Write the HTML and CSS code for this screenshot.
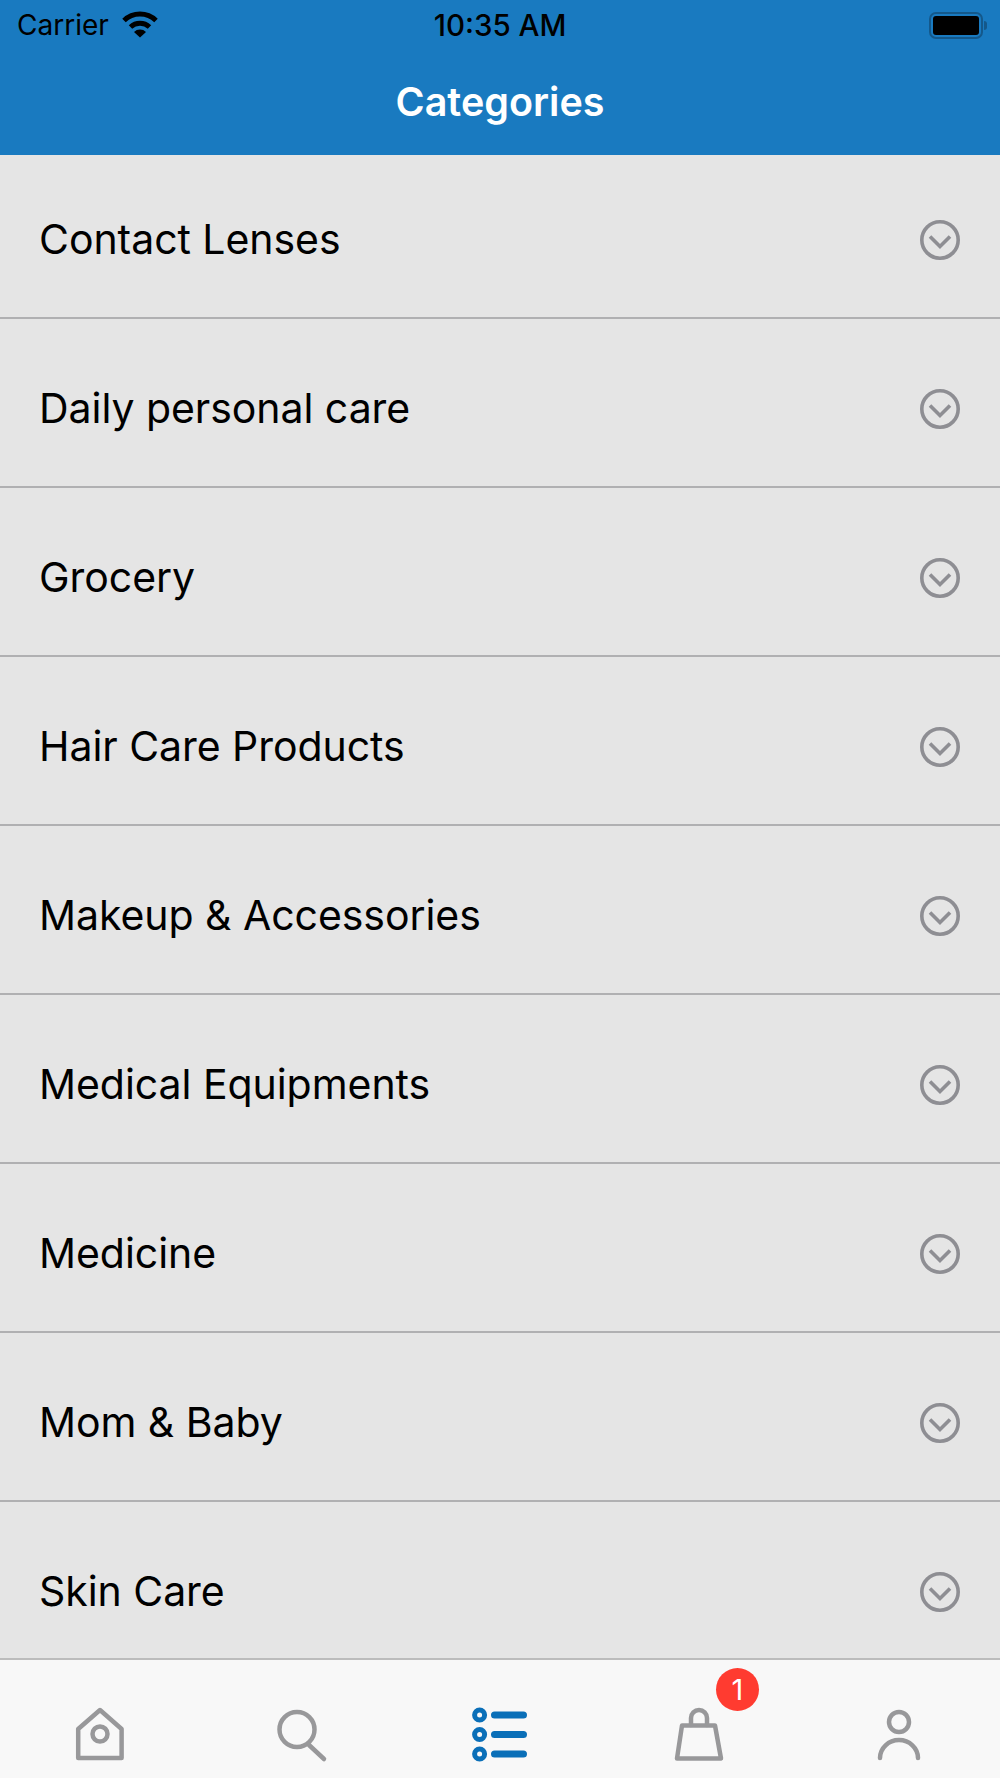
FILE: index.html
```html
<!DOCTYPE html>
<html lang="en">
<head>
    <meta charset="UTF-8">
    <meta name="viewport" content="width=device-width, initial-scale=1.0">
    <title>Categories</title>
    <link rel="stylesheet" href="styles.css">
</head>
<body>
    <div class="screen">
        <header class="top">
            <div class="status">
                <div class="carrier">
                    <span>Carrier</span>
                    <svg class="wifi" width="38" height="28" viewBox="0 0 38 28">
                        <path d="M3 10.5 A23 23 0 0 1 35 10.5" fill="none" stroke="#000" stroke-width="5"/>
                        <path d="M9.5 17 A14 14 0 0 1 28.5 17" fill="none" stroke="#000" stroke-width="5"/>
                        <path d="M13 22 A8.5 8.5 0 0 1 25 22 L19 27.5 Z" fill="#000"/>
                    </svg>
                </div>
                <div class="clock">10:35 AM</div>
                <div class="battery">
                    <div class="battery-body"><div class="battery-fill"></div></div>
                    <div class="battery-nub"></div>
                </div>
            </div>
            <h1 class="title">Categories</h1>
        </header>

        <main class="list">
            <div class="row">
                <span>Contact Lenses</span>
                <svg class="chev" width="40" height="40" viewBox="0 0 40 40"><circle cx="20" cy="20" r="18.2"/><path d="M10 16.5 L20 26.5 L30 16.5"/></svg>
            </div>
            <div class="row">
                <span>Daily personal care</span>
                <svg class="chev" width="40" height="40" viewBox="0 0 40 40"><circle cx="20" cy="20" r="18.2"/><path d="M10 16.5 L20 26.5 L30 16.5"/></svg>
            </div>
            <div class="row">
                <span>Grocery</span>
                <svg class="chev" width="40" height="40" viewBox="0 0 40 40"><circle cx="20" cy="20" r="18.2"/><path d="M10 16.5 L20 26.5 L30 16.5"/></svg>
            </div>
            <div class="row">
                <span>Hair Care Products</span>
                <svg class="chev" width="40" height="40" viewBox="0 0 40 40"><circle cx="20" cy="20" r="18.2"/><path d="M10 16.5 L20 26.5 L30 16.5"/></svg>
            </div>
            <div class="row">
                <span>Makeup &amp; Accessories</span>
                <svg class="chev" width="40" height="40" viewBox="0 0 40 40"><circle cx="20" cy="20" r="18.2"/><path d="M10 16.5 L20 26.5 L30 16.5"/></svg>
            </div>
            <div class="row">
                <span>Medical Equipments</span>
                <svg class="chev" width="40" height="40" viewBox="0 0 40 40"><circle cx="20" cy="20" r="18.2"/><path d="M10 16.5 L20 26.5 L30 16.5"/></svg>
            </div>
            <div class="row">
                <span>Medicine</span>
                <svg class="chev" width="40" height="40" viewBox="0 0 40 40"><circle cx="20" cy="20" r="18.2"/><path d="M10 16.5 L20 26.5 L30 16.5"/></svg>
            </div>
            <div class="row">
                <span>Mom &amp; Baby</span>
                <svg class="chev" width="40" height="40" viewBox="0 0 40 40"><circle cx="20" cy="20" r="18.2"/><path d="M10 16.5 L20 26.5 L30 16.5"/></svg>
            </div>
            <div class="row">
                <span>Skin Care</span>
                <svg class="chev" width="40" height="40" viewBox="0 0 40 40"><circle cx="20" cy="20" r="18.2"/><path d="M10 16.5 L20 26.5 L30 16.5"/></svg>
            </div>
        </main>

        <nav class="tabs">
            <div class="tab">
                <svg class="tab-icon" width="60" height="60" viewBox="0 0 60 60">
                    <path d="M8.2 53 V24 L30 5 L51.6 24 V53 Z"/>
                    <circle cx="30" cy="29" r="7.5"/>
                </svg>
            </div>
            <div class="tab">
                <svg class="tab-icon" width="60" height="60" viewBox="0 0 60 60">
                    <circle cx="27" cy="24.5" r="17.5"/>
                    <path d="M39 40 L54 54"/>
                </svg>
            </div>
            <div class="tab">
                <svg class="tab-icon active" width="60" height="60" viewBox="0 0 60 60">
                    <circle cx="9.6" cy="10" r="5"/>
                    <circle cx="9.6" cy="29.5" r="5"/>
                    <circle cx="9.6" cy="49" r="5"/>
                    <path d="M24.6 10 H53.4 M24.6 29.5 H53.4 M24.6 49 H53.4"/>
                </svg>
            </div>
            <div class="tab">
                <svg class="tab-icon" width="60" height="60" viewBox="0 0 60 60">
                    <path d="M12 20.5 H45 L51 53.5 H7 Z"/>
                    <path d="M21 20 V13 A8 8 0 0 1 37 13 V20"/>
                </svg>
                <span class="badge">1</span>
            </div>
            <div class="tab">
                <svg class="tab-icon" width="60" height="60" viewBox="0 0 60 60">
                    <circle cx="29" cy="17" r="10"/>
                    <path d="M10 53 A19 18 0 0 1 48 53"/>
                </svg>
            </div>
        </nav>
    </div>
</body>
</html>
```
FILE: styles.css
```css
body {
    margin: 0;
    font-family: Inter, "Liberation Sans", sans-serif;
}

.screen {
    width: 1000px;
    height: 1778px;
    display: flex;
    flex-direction: column;
    overflow: hidden;
    background: #e5e5e5;
}

/* top bar */
.top {
    height: 155px;
    flex: none;
    background: #197ac0;
}

.status {
    height: 50px;
    display: grid;
    grid-template-columns: 1fr auto 1fr;
    align-items: center;
    color: #000;
}

.carrier {
    display: flex;
    align-items: center;
    gap: 12px;
    padding-left: 17px;
    font-size: 28px;
}

.wifi {
    margin-top: -3px;
}

.clock {
    font-size: 29.5px;
    font-weight: 500;
}

.battery {
    display: flex;
    align-items: center;
    justify-content: flex-end;
    padding-right: 13px;
}

.battery-body {
    width: 54px;
    height: 27px;
    box-sizing: border-box;
    border: 2.5px solid #14588a;
    border-radius: 7px;
    padding: 2px;
}

.battery-fill {
    height: 100%;
    background: #000;
    border-radius: 3px;
}

.battery-nub {
    width: 3px;
    height: 9px;
    margin-left: 1px;
    background: #14588a;
    border-radius: 0 3px 3px 0;
}

.title {
    margin: 0;
    margin-top: 27px;
    text-align: center;
    color: #fff;
    font-size: 39.5px;
    line-height: 50px;
    font-weight: 600;
}

/* category rows */
.list {
    flex: 1;
    min-height: 0;
    overflow: hidden;
}

.row {
    height: 169px;
    box-sizing: border-box;
    display: flex;
    align-items: center;
    justify-content: space-between;
    padding: 11px 40.5px 0 39px;
    border-bottom: 2px solid #b0b0b2;
    color: #000;
    font-size: 41px;
    letter-spacing: -0.05px;
}

.row:first-child {
    height: 164px;
    padding-top: 6px;
}

.chev {
    flex: none;
    margin-top: 1px;
    fill: none;
    stroke: #8e8e93;
    stroke-width: 3.6;
}

/* bottom tabs */
.tabs {
    height: 120px;
    flex: none;
    box-sizing: border-box;
    display: flex;
    border-top: 2px solid #bcbcbc;
    background: #f8f8f8;
}

.tab {
    flex: 1;
    position: relative;
    display: flex;
    justify-content: center;
    padding-top: 45px;
}

.tab-icon {
    fill: none;
    stroke: #98989a;
    stroke-width: 4.5;
    stroke-linejoin: round;
    stroke-linecap: round;
}

.tab-icon.active {
    stroke: #0a6fb8;
}

.tab-icon.active path {
    stroke-width: 7.2;
}

.tab-icon.active circle {
    stroke-width: 5;
}

.badge {
    position: absolute;
    top: 8px;
    left: 116px;
    width: 43px;
    height: 43px;
    border-radius: 50%;
    background: #ff3b30;
    color: #fff;
    font-size: 29px;
    line-height: 43px;
    text-align: center;
}
```
